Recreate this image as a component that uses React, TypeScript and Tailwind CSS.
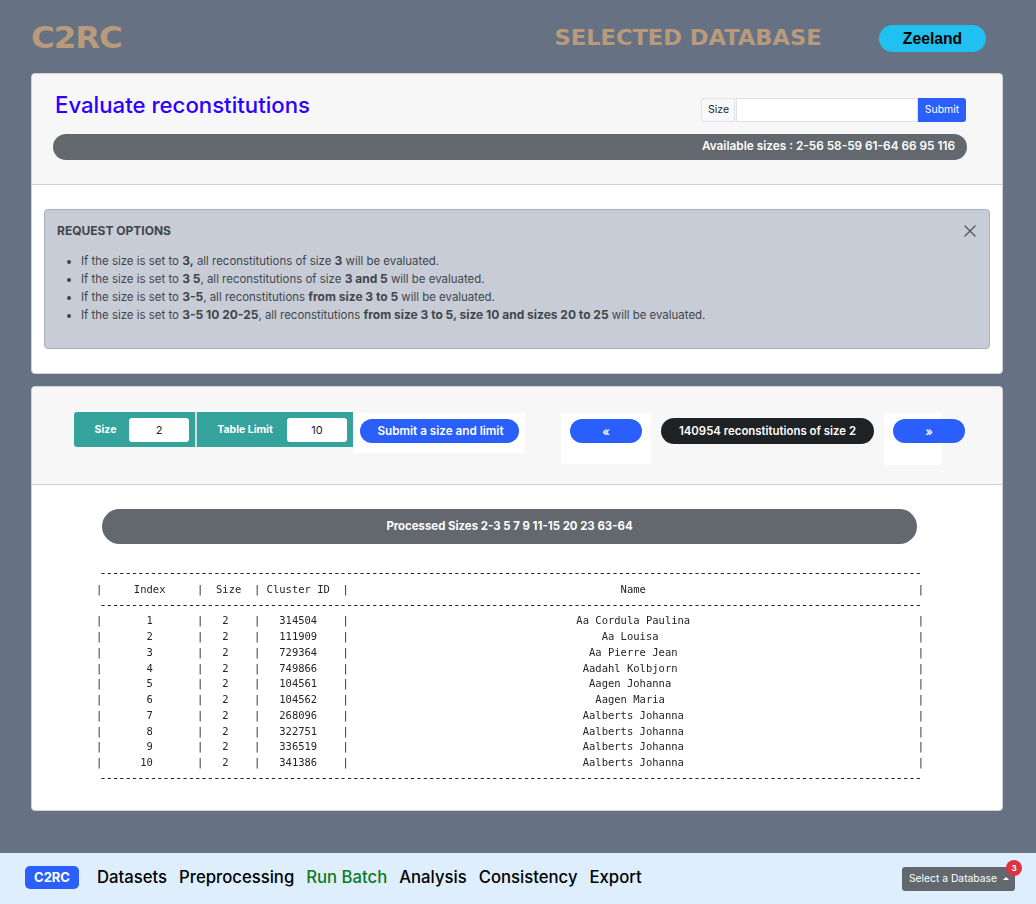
import React from 'react'
import { X } from 'lucide-react'

const rows: [number, number, string][] = [
    [1, 314504, 'Aa Cordula Paulina'],
    [2, 111909, 'Aa Louisa'],
    [3, 729364, 'Aa Pierre Jean'],
    [4, 749866, 'Aadahl Kolbjorn'],
    [5, 104561, 'Aagen Johanna'],
    [6, 104562, 'Aagen Maria'],
    [7, 268096, 'Aalberts Johanna'],
    [8, 322751, 'Aalberts Johanna'],
    [9, 336519, 'Aalberts Johanna'],
    [10, 341386, 'Aalberts Johanna'],
]

function cell(text: string, width: number) {
    const left = Math.floor((width - text.length) / 2)
    return ' '.repeat(left) + text + ' '.repeat(width - text.length - left)
}

function line(a: string, b: string, c: string, d: string) {
    return '|' + cell(a, 15) + '|' + cell(b, 8) + '|' + cell(c, 13) + '|' + cell(d, 90) + '|'
}

function Dashes() {
    return <span className="text-[12.5px] leading-[10px] tracking-[-1.205px]">{'-'.repeat(130)}</span>
}

const body = rows.map(([i, id, name]) => line(String(i), '2', String(id), name)).join('\n')

export default function App() {
    return (
        <div className="flex flex-col min-h-[904px] bg-[#667284] font-['Inter',sans-serif]">
            <div className="flex items-center h-[73px] pl-[31px] pr-[50px] text-[#b99b7b] font-['DejaVu_Sans',sans-serif] font-bold">
                <span className="mt-[2px] text-[30px] leading-none tracking-[-1px] scale-x-[1.08] origin-left">C2RC</span>
                <span className="ml-auto mt-[2px] text-[22px] leading-none scale-x-[1.025] origin-right">SELECTED DATABASE</span>
                <span className="ml-[57px] mt-1 w-[107px] h-[27px] rounded-full bg-[#20c0f0] flex items-center justify-center text-black text-[15.7px] font-bold font-['Liberation_Sans',sans-serif]">Zeeland</span>
            </div>

            <div className="flex flex-col gap-3 pl-[31px] pr-[33px]">
                <div className="bg-white rounded border border-[#cfd2d6] h-[301px] overflow-hidden">
                    <div className="h-[111px] bg-[#f7f7f7] border-b border-[#cfcfcf] pl-[21px] pr-[35px] pt-[15px]">
                        <div className="flex items-start justify-between h-[45px]">
                            <h1 className="pl-[2px] -mt-px text-[22.2px] leading-[34px] font-medium text-[#2b00ff]">Evaluate reconstitutions</h1>
                            <div className="flex mt-[9px] h-6 text-[10.5px] mr-px">
                                <span className="flex items-center px-[6px] w-[34px] bg-[#f8f9fa] border border-[#dee2e6] rounded-l-[3px] text-[#212529]">Size</span>
                                <input className="w-[182px] bg-white border border-[#dee2e6] ml-px outline-none" />
                                <button className="w-[48px] bg-[#2b5ffc] text-white rounded-r-[3px]">Submit</button>
                            </div>
                        </div>
                        <div className="flex items-center justify-end h-[26px] rounded-full bg-[#62686e] pr-3 text-[11.8px] font-semibold text-white">
                            Available sizes : 2-56 58-59 61-64 66 95 116
                        </div>
                    </div>
                    <div className="relative mx-3 mt-6 h-[140px] rounded bg-[#c7ccd6] border border-[#a9b0b8] pl-3 pt-3 text-[11.45px] text-[#41464b]">
                        <p className="font-bold text-[12px] leading-[18px]">REQUEST OPTIONS</p>
                        <ul className="list-disc pl-6 mt-3 leading-[18px] [&_b]:text-[12px]">
                            <li>If the size is set to <b>3,</b> all reconstitutions of size <b>3</b> will be evaluated.</li>
                            <li>If the size is set to <b>3 5</b>, all reconstitutions of size <b>3 and 5</b> will be evaluated.</li>
                            <li>If the size is set to <b>3-5</b>, all reconstitutions <b>from size 3 to 5</b> will be evaluated.</li>
                            <li>If the size is set to <b>3-5 10 20-25</b>, all reconstitutions <b>from size 3 to 5, size 10 and sizes 20 to 25</b> will be evaluated.</li>
                        </ul>
                        <X size={20} strokeWidth={1.5} className="absolute right-[9px] top-[11px] text-[#50555a]" />
                    </div>
                </div>

                <div className="bg-white rounded border border-[#cfd2d6] h-[425px] overflow-hidden">
                    <div className="flex items-start h-[98px] bg-[#f7f7f7] border-b border-[#cfcfcf] pl-[42px] pt-[25px]">
                        <div className="flex items-center h-[35px] w-[279px] bg-[#33a39c] rounded-l-[3px] text-[10.5px] font-bold text-white">
                            <span className="w-[55px] text-center pl-[8px]">Size</span>
                            <input readOnly value="2" className="w-[60px] h-6 bg-white rounded-[3px] text-center font-normal text-[11px] text-[#212529] outline-none" />
                            <span className="w-[6px]" />
                            <span className="w-[2px] h-full bg-[#d5dadb]" />
                            <span className="w-[90px] text-center pl-[6px]">Table Limit</span>
                            <input readOnly value="10" className="w-[60px] h-6 bg-white rounded-[3px] text-center font-normal text-[11px] text-[#212529] outline-none" />
                        </div>
                        <div className="flex justify-center w-[172px] h-[40px] mt-px pt-[6px] bg-white rounded-r-[2px]">
                            <button className="w-[159px] h-6 pt-[2px] pl-[3px] rounded-full bg-[#2b5ffc] text-white text-[11.7px] font-semibold">Submit a size and limit</button>
                        </div>
                        <div className="flex justify-center w-[90px] h-[51px] ml-9 mt-px pt-[6px] bg-white rounded-[2px]">
                            <button className="w-[72px] h-6 pt-px rounded-full bg-[#2b5ffc] text-white text-[12px] font-semibold">«</button>
                        </div>
                        <div className="flex items-center justify-center w-[213px] h-[26px] pt-[2px] ml-[10px] mt-[6px] rounded-full bg-[#1f2225] text-white text-[11.4px] font-semibold">140954 reconstitutions of size 2</div>
                        <div className="w-[58px] h-[52px] ml-[10px] mt-px pt-[6px] pl-[9px] bg-white rounded-[2px]">
                            <button className="block w-[72px] h-6 pt-px rounded-full bg-[#2b5ffc] text-white text-[12px] font-semibold">»</button>
                        </div>
                    </div>
                    <div className="pt-6">
                        <div className="flex items-center justify-center h-[35px] pt-px ml-[70px] w-[815px] rounded-full bg-[#62686e] text-white text-[11.4px] font-bold">
                            Processed Sizes 2-3 5 7 9 11-15 20 23 63-64
                        </div>
                        <pre className="mt-[22px] pr-[14px] text-center font-['DejaVu_Sans_Mono',monospace] text-[10.5px] leading-[15.75px] text-[#212529] [will-change:transform]">
                            <Dashes />{'\n'}{line('Index', 'Size', 'Cluster ID', 'Name')}{'\n'}<Dashes />{'\n'}{body}{'\n'}<Dashes />
                        </pre>
                    </div>
                </div>
            </div>

            <div className="flex items-center h-[51px] mt-auto bg-[#dfeefc] pl-[25px] pr-[21px]">
                <span className="flex items-center justify-center w-[54px] h-[23px] -mt-[2px] rounded-[5px] bg-[#2b5ffc] text-white text-[13px] font-bold">C2RC</span>
                <nav className="flex gap-3 ml-[18px] -mt-[2px] text-[16.7px] font-medium text-black">
                    <span>Datasets</span>
                    <span>Preprocessing</span>
                    <span className="text-[#0a7a1e]">Run Batch</span>
                    <span>Analysis</span>
                    <span>Consistency</span>
                    <span>Export</span>
                </nav>
                <div className="relative flex items-center ml-auto w-[113px] h-6 rounded-[3px] bg-[#62686e] pl-[7px] text-[10.3px] text-white">
                    Select a Database
                    <span className="ml-[6px] w-0 h-0 border-x-[3px] border-x-transparent border-b-[3px] border-b-white" />
                    <span className="absolute -right-[7px] -top-[7px] flex items-center justify-center w-4 h-4 rounded-full bg-[#dc3545] text-[8px] font-bold">3</span>
                </div>
            </div>
        </div>
    )
}
